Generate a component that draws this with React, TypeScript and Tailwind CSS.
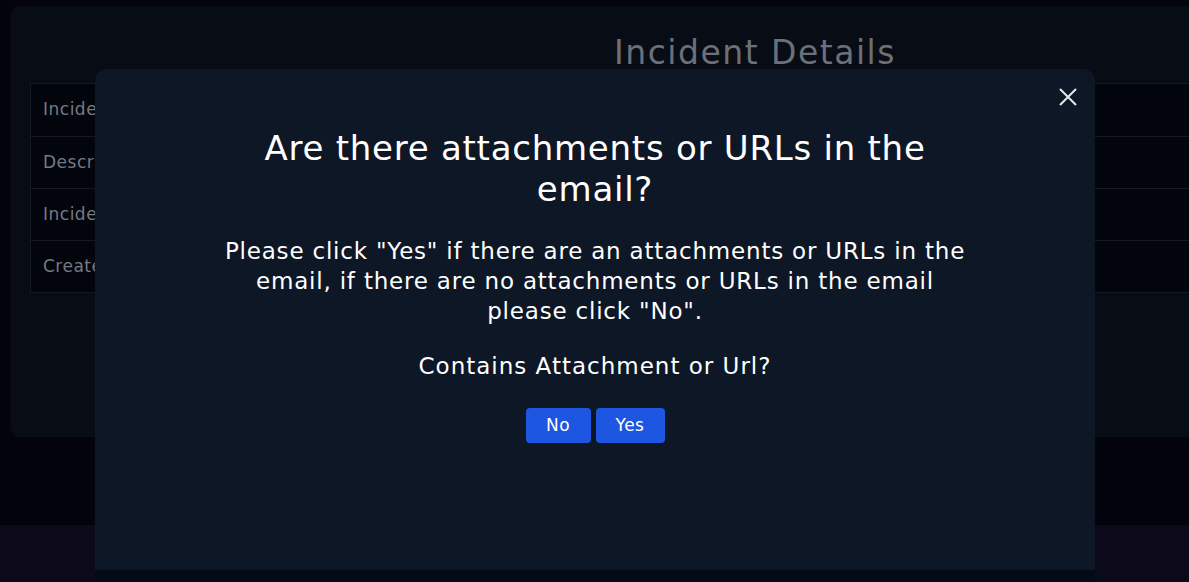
const rows = ["Incident Number", "Description", "Incident Type", "Created By"];

export default function App() {
  return (
    <div
      className="relative h-[582px] w-full overflow-hidden bg-[#03040b] text-white"
      style={{ fontFamily: '"DejaVu Sans", sans-serif' }}
    >
      {/* page behind the modal */}
      <div className="flex h-[525px] flex-col pt-[6px] pl-[11px]">
        <div className="h-[431px] w-[1488px] rounded-lg bg-[#080c14] px-[19px] pt-[27px]">
          <h1 className="text-center text-[33px] leading-[40px] tracking-[1.5px] text-[#6b7079]">Incident Details</h1>
          <div className="mt-[10px] border border-[#151923] bg-[#03050c]">
            {rows.map((r, i) => (
              <div
                key={r}
                className={`flex h-[52px] items-center px-[12px] text-[17px] tracking-[0.5px] text-[#757a83] ${
                  i > 0 ? "border-t border-[#151923]" : ""
                }`}
              >
                {r}
              </div>
            ))}
          </div>
        </div>
      </div>
      <div className="h-[57px] bg-[#0c0a1a]" />

      {/* modal */}
      <div className="absolute left-[95px] top-[69px] flex w-[1000px] flex-col">
        <div className="relative flex h-[501px] flex-col items-center rounded-t-xl bg-[#0e1726] pt-[59px]">
          <button className="absolute left-[964px] top-[19px] text-[#e5e7eb]">
            <svg width="18" height="18" viewBox="0 0 18 18" fill="none" stroke="currentColor" strokeWidth="2">
              <path d="M1 1L17 17M17 1L1 17" />
            </svg>
          </button>
          <h2 className="text-center text-[34px] leading-[41px] tracking-[0.75px] text-white">
            Are there attachments or URLs in the
            <br />
            email?
          </h2>
          <p className="mt-[26px] text-center text-[23px] leading-[30px] tracking-[0.8px] text-white">
            Please click "Yes" if there are an attachments or URLs in the
            <br />
            email, if there are no attachments or URLs in the email
            <br />
            please click "No".
          </p>
          <p className="mt-[25px] text-center text-[23px] leading-[30px] tracking-[1px] text-white">
            Contains Attachment or Url?
          </p>
          <div className="mt-[27px] flex gap-[5px]">
            <button className="h-[35px] w-[65px] rounded bg-[#1d56e0] text-[17px] tracking-[0.5px] text-white">No</button>
            <button className="h-[35px] w-[69px] rounded bg-[#1d56e0] text-[17px] tracking-[0.5px] text-white">Yes</button>
          </div>
        </div>
        <div className="h-[12px] bg-[#050b16]" />
      </div>
    </div>
  );
}
